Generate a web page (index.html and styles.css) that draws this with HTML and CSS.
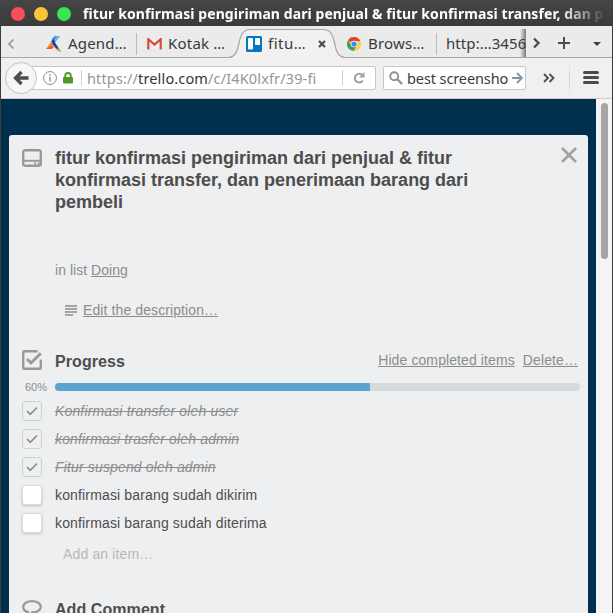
FILE: index.html
```html
<!DOCTYPE html>
<html lang="id">
<head>
<meta charset="utf-8">
<title>fitur konfirmasi pengiriman dari penjual</title>
<link rel="stylesheet" href="styles.css">
</head>
<body>
<div class="window">
  <header class="titlebar">
    <i class="dot red"></i><i class="dot yellow"></i><i class="dot green"></i>
    <span class="wintitle">fitur konfirmasi pengiriman dari penjual &amp; fitur konfirmasi transfer, dan p</span>
  </header>

  <nav class="tabs">
    <svg class="tab-prev" width="10" height="14" viewBox="0 0 10 14"><path d="M7.500 2.500 3 7l4.500 4.500" fill="none" stroke="#999" stroke-width="1.700"/></svg>
    <div class="tab tab-agenda">
      <svg width="16" height="16" viewBox="0 0 16 16"><path d="M6 3 9 0h4L9 6 6 8z" fill="#1d7fe0"/><path d="M10 0h4L9.500 6 8 4z" fill="#58b5ee"/><path d="M5 6 8 9 7 12 0 13z" fill="#f58a2c"/><path d="M0 13 5 10l3 1-2 2z" fill="#ef5a3c"/><path d="M5 5 7.500 4 10 8l5 8-4-2-3-4z" fill="#1f3f9a"/><path d="m11 12 4.500 4L10 14z" fill="#efb443"/></svg>
      <span class="tab-label">Agend…</span>
    </div>
    <div class="tab tab-mail">
      <svg width="15" height="12" viewBox="0 0 15 12"><path d="M1 1h13v10H1z" fill="#efeeee"/><path d="M1.300 11.500V1.200L7.500 6.500l6.200-5.300v10.300" fill="none" stroke="#d8493c" stroke-width="2.200"/></svg>
      <span class="tab-label">Kotak …</span>
    </div>
    <div class="tab tab-active">
      <svg class="tab-shape" width="118" height="33" viewBox="0 0 118 33"><path d="M0 33V31.500C5 31.500 8 29 9.500 23L12 13C14 6 16.500 3.500 23 3.500H94C101 3.500 103.500 6 105.500 13L108 23C109.500 29 113 31.500 118 31.500V33z" fill="#f2f1f0"/><path d="M0 31.500C5 31.500 8 29 9.500 23L12 13C14 6 16.500 3.500 23 3.500H94C101 3.500 103.500 6 105.500 13L108 23C109.500 29 113 31.500 118 31.500" fill="none" stroke="#a5a7ab" stroke-width="1.200"/></svg>
      <svg class="above" width="16" height="16" viewBox="0 0 16 16"><rect width="16" height="16" rx="1.500" fill="#0079bf"/><rect x="2" y="2" width="5" height="11.500" rx=".8" fill="#fff"/><rect x="9" y="2" width="5" height="7" rx=".8" fill="#fff"/></svg>
      <span class="tab-label above">fitu…</span>
      <svg class="tab-close above" width="8" height="8" viewBox="0 0 8 8"><path d="m1 1 6 6M7 1 1 7" stroke="#4a4b4a" stroke-width="2.200"/></svg>
    </div>
    <div class="tab tab-browse">
      <svg width="14" height="14" viewBox="0 0 14 14"><circle cx="7" cy="7" r="7" fill="#fbd146"/><path d="M7 7 1 3.400A7 7 0 0 1 13.200 4H7z" fill="#dc4437"/><path d="M1 3.400A7 7 0 0 0 6.500 14L9.500 9 7 7 4.500 8.500z" fill="#3ba05b"/><circle cx="7" cy="7" r="3.300" fill="#fff"/><circle cx="7" cy="7" r="2.600" fill="#4385ed"/></svg>
      <span class="tab-label">Brows…</span>
    </div>
    <div class="tab tab-http"><span class="tab-label">http:…3456</span></div>
    <div class="tab-tools">
      <svg width="85" height="31" viewBox="0 0 85 31"><path d="m7 12.500 4.500 4.500L7 21.500" fill="none" stroke="#4c4d4c" stroke-width="2.300"/><path d="M31 17h12M37 11v12" stroke="#4c4d4c" stroke-width="2"/><path d="M66 16h8l-4 4z" fill="#393f4c"/></svg>
    </div>
  </nav>

  <div class="toolbar">
    <div class="back"><svg width="30" height="30" viewBox="0 0 30 30"><path d="m15.500 9-6 6 6 6M10 15h12.500" fill="none" stroke="#4b4c4b" stroke-width="3.300"/></svg></div>
    <div class="urlbar">
      <svg class="info" width="14" height="14" viewBox="0 0 14 14"><circle cx="7" cy="7" r="6.400" fill="none" stroke="#888" stroke-width="1"/><path d="M7 6v4.500M7 3.300v1.500" stroke="#888" stroke-width="1.400"/></svg>
      <svg class="lock" width="10" height="12" viewBox="0 0 10 12"><path d="M2.200 6V3.800a2.800 2.800 0 0 1 5.600 0V6" fill="none" stroke="#4d9a26" stroke-width="1.800"/><rect y="5" width="10" height="6.500" rx="1" fill="#4d9a26"/></svg>
      <i class="sep"></i>
      <span class="url">https://<b>trello.com</b>/c/I4K0lxfr/39-fi</span>
      <i class="sep sep-reload"></i>
      <svg class="reload" width="12" height="12" viewBox="0 0 12 12"><path d="M9.500 3.500A4.300 4.300 0 1 0 9.800 8.400" fill="none" stroke="#97a0aa" stroke-width="2"/><path d="M11.500 0v5.500H6z" fill="#97a0aa"/></svg>
    </div>
    <div class="search">
      <svg width="14" height="14" viewBox="0 0 14 14"><circle cx="5.200" cy="5.200" r="4" fill="none" stroke="#929292" stroke-width="1.900"/><path d="m8 8 5 5" stroke="#929292" stroke-width="2.400"/></svg>
      <span class="query">best screensho</span>
      <svg width="11" height="12" viewBox="0 0 11 12"><path d="M0 6h9M5 1l5 5-5 5" fill="none" stroke="#8794a6" stroke-width="1.900"/></svg>
    </div>
    <svg class="more" width="12" height="10" viewBox="0 0 12 10"><path d="m1 1 4 4-4 4M6.500 1l4 4-4 4" fill="none" stroke="#4c4d4c" stroke-width="1.800"/></svg>
    <i class="tool-sep"></i>
    <div class="menu"><i></i><i></i><i></i></div>
  </div>

  <div class="viewport">
    <main class="page">
      <article class="card">
        <div class="head">
          <svg class="icon" width="20" height="18" viewBox="0 0 20 18"><rect x="1.200" y="1.200" width="17.600" height="15.600" rx="2" fill="none" stroke="#999" stroke-width="2.400"/><path d="M1 11.800h18" stroke="#999" stroke-width="2"/><path d="M12 14.500h2M15.500 14.500h2" stroke="#999" stroke-width="2"/></svg>
          <h1>fitur konfirmasi pengiriman dari penjual &amp; fitur konfirmasi transfer, dan penerimaan barang dari pembeli</h1>
          <svg class="close" width="16" height="16" viewBox="0 0 16 16"><path d="m1 1 14 14M15 1 1 15" stroke="#a1a1a1" stroke-width="2.700"/></svg>
        </div>
        <p class="inlist">in list <a>Doing</a></p>
        <p class="desc"><svg width="12" height="11" viewBox="0 0 12 11"><path d="M0 1h12M0 4h12M0 7h12M0 10h8" stroke="#8c8c8c" stroke-width="1.300"/></svg><a>Edit the description…</a></p>
        <div class="section">
          <svg class="icon" width="20" height="20" viewBox="0 0 20 20"><path d="M15.500 1.200H2.200a1 1 0 0 0-1 1v15.600a1 1 0 0 0 1 1h15.600a1 1 0 0 0 1-1V9.500" fill="none" stroke="#999" stroke-width="2.400"/><path d="m5 9 4 4L18.800 3.200" fill="none" stroke="#999" stroke-width="2.800"/></svg>
          <h2>Progress</h2>
          <a>Hide completed items</a><a>Delete…</a>
        </div>
        <div class="progress"><span class="pct">60%</span><div class="track"><div class="fill"></div></div></div>
        <ul class="items">
          <li class="done"><span class="box"><svg width="12" height="10" viewBox="0 0 12 10"><path d="m1 5 3.300 3.300L11 1.500" fill="none" stroke="#8c8c8c" stroke-width="1.700"/></svg></span>Konfirmasi transfer oleh user</li>
          <li class="done"><span class="box"><svg width="12" height="10" viewBox="0 0 12 10"><path d="m1 5 3.300 3.300L11 1.500" fill="none" stroke="#8c8c8c" stroke-width="1.700"/></svg></span>konfirmasi trasfer oleh admin</li>
          <li class="done"><span class="box"><svg width="12" height="10" viewBox="0 0 12 10"><path d="m1 5 3.300 3.300L11 1.500" fill="none" stroke="#8c8c8c" stroke-width="1.700"/></svg></span>Fitur suspend oleh admin</li>
          <li><span class="box"></span>konfirmasi barang sudah dikirim</li>
          <li><span class="box"></span>konfirmasi barang sudah diterima</li>
        </ul>
        <p class="add">Add an item…</p>
        <div class="section comment">
          <svg class="icon" width="20" height="18" viewBox="0 0 20 18"><path d="M6 12.200C3 11.300 1.200 9.300 1.200 6.800 1.200 3.500 5 1.200 10 1.200s8.800 2.300 8.800 5.600-3.800 5.700-8.800 5.700C10 14.500 8 16.500 5 16.800 6.300 15.500 6.800 13.800 6 12.200z" fill="none" stroke="#999" stroke-width="2.300"/></svg>
          <h2>Add Comment</h2>
        </div>
      </article>
    </main>
    <div class="scrollbar"><div class="thumb"></div></div>
  </div>
</div>
</body>
</html>
```
FILE: styles.css
```css
* { box-sizing: border-box; }
body { margin: 0; overflow: hidden; }
svg, i { display: block; flex: none; }
h1, h2, p, ul { margin: 0; padding: 0; }
.window {
  width: 613px; height: 613px; overflow: hidden;
  display: flex; flex-direction: column;
  background: #3c3b3b; padding: 0 1px;
  font-family: "Noto Sans", "Open Sans", sans-serif; color: #383a3c;
}

.titlebar { height: 26px; flex: none; display: flex; align-items: center; gap: 9px; padding: 2px 0 0 11px; margin: 0 -1px; background: linear-gradient(#464545, #3c3b3b); }
.dot { width: 14px; height: 14px; border-radius: 50%; }
.red { background: #f94f58; }
.yellow { background: #fcc337; }
.green { background: #35e748; }
.wintitle {
  width: 523px; margin: -1px 0 0 3px; overflow: hidden; white-space: nowrap;
  font-size: 14px; font-weight: 700; letter-spacing: 0.08px; color: #fff;
  -webkit-mask-image: linear-gradient(90deg, #000 91%, transparent);
  mask-image: linear-gradient(90deg, #000 91%, transparent);
}

.tabs { height: 32px; flex: none; display: flex; background: #ebebeb; border-bottom: 1px solid #a5a7ab; position: relative; font-size: 15px; }
.tab-prev { margin: 11px 0 0 5px; }
.tab { display: flex; align-items: center; height: 31px; padding-top: 4px; position: relative; white-space: nowrap; }
.tab-label { margin-top: -1px; letter-spacing: 0.2px; }
.tab-agenda { width: 121px; padding-left: 30px; gap: 6px; background: linear-gradient(#bbb, #bbb) right 7px / 1px 22px no-repeat; }
.tab-mail { width: 98px; padding-left: 10px; gap: 6px; }
.tab-active { width: 100px; padding-left: 11px; gap: 6px; }
.tab-active .tab-label { width: 40px; letter-spacing: 0.5px; }
.tab-shape { position: absolute; left: -7px; top: 0; z-index: 1; }
.above { position: relative; z-index: 2; }
.tab-close { margin-left: 4px; }
.tab-browse { width: 102px; padding-left: 12px; gap: 7px; background: linear-gradient(#bbb, #bbb) right 7px / 1px 22px no-repeat; }
.tab-http { width: 89px; padding-left: 9px; overflow: hidden; }
.tab-http .tab-label { letter-spacing: 0.08px; }
.tab-http::after { content: ""; position: absolute; right: 0; top: 3px; width: 6px; height: 28px; background: linear-gradient(90deg, transparent, rgba(60, 60, 60, .65)); }
.tab-tools { width: 85px; margin-left: 1px; }

.toolbar { height: 41px; flex: none; display: flex; align-items: center; background: #f1f0f0; border-bottom: 1px solid #c9cbcc; font-size: 14.500px; }
.back { width: 32px; height: 32px; margin-left: 4px; border: 1px solid #c4c4c4; border-radius: 50%; background: #f6f6f6; z-index: 1; display: flex; align-items: center; justify-content: center; }
.urlbar { width: 345px; height: 24px; margin-left: -6px; border: 1px solid #c8c8c8; border-radius: 2px; background: #fff; display: flex; align-items: center; }
.info { margin-left: 11px; }
.lock { margin-left: 6px; }
.sep { width: 1px; height: 16px; margin-left: 8px; background: #d0d0d0; }
.url { width: 254px; padding-left: 5px; color: #969696; white-space: nowrap; letter-spacing: 0.14px; }
.url b { font-weight: 400; color: #34373a; }
.sep-reload { margin-left: 6px; }
.reload { margin-left: 10px; }
.search { width: 143px; height: 24px; margin-left: 7px; padding: 0 3px 0 5px; border: 1px solid #c8c8c8; border-radius: 2px; background: #fff; display: flex; align-items: center; gap: 4px; }
.query { flex: 1; white-space: nowrap; letter-spacing: -0.1px; }
.more { margin-left: 17px; }
.tool-sep { width: 1px; height: 36px; margin-left: 14px; background: linear-gradient(transparent, #d0d0d0, transparent); }
.menu { margin: -2px 0 0 13px; display: grid; gap: 2px; }
.menu i { width: 16px; height: 3px; border-radius: 1.500px; background: #4a4b4a; }

.viewport { flex: 1; min-height: 0; display: flex; font-family: "Liberation Sans", Arial, sans-serif; color: #4d4d4d; font-size: 14px; line-height: 18px; letter-spacing: 0.15px; }
.page { width: 595px; background: #00304d; padding: 36px 8px 0; overflow: hidden; }
.scrollbar { width: 16px; background: #f4f4f4; padding: 4px 4px 0 5px; }
.thumb { height: 156px; border-radius: 4px; background: #a5a5a5; }
.card { height: 600px; border-radius: 3px 3px 0 0; background: #edeff0; padding: 12px 8px 0 13px; }
.card a { color: #8c8c8c; text-decoration: underline; }
.head { display: flex; height: 66px; }
.head .icon { margin: 2px 13px 0 0; }
.icon { margin-right: 13px; }
h1 { width: 440px; font-size: 18px; line-height: 22px; letter-spacing: 0; }
.close { margin: 0 3px 0 auto; }
.inlist { padding-left: 33px; margin-top: 48px; color: #8c8c8c; letter-spacing: 0.03px; }
.desc { display: flex; align-items: center; gap: 6px; padding-left: 43px; margin-top: 22px; }
.desc a { letter-spacing: 0.1px; }
.section { display: flex; height: 20px; margin-top: 31px; }
.section h2 { font-size: 16px; line-height: 24px; flex: 1; letter-spacing: 0.07px; }
.section a { margin-right: 2px; line-height: 20px; letter-spacing: 0.1px; }
.section a + a { margin-left: 6px; }
.progress { display: flex; align-items: center; height: 14px; margin-top: 10px; }
.pct { width: 33px; padding-left: 3px; font-size: 11px; letter-spacing: 0; color: #8c8c8c; }
.track { flex: 1; height: 8px; border-radius: 4px; overflow: hidden; background: #d6dadc; }
.fill { width: 60%; height: 8px; background: #5ba4cf; }
.items { list-style: none; margin-top: 3px; }
.items li { display: flex; align-items: center; height: 28px; }
.box { width: 20px; height: 20px; margin-right: 13px; border: 1px solid #dcdcdc; border-radius: 3px; background: #fff; box-shadow: 0 1px 3px rgba(0, 0, 0, .2); display: flex; align-items: center; justify-content: center; }
.done { color: #8c8c8c; font-style: italic; text-decoration: line-through; }
.done .box { background: #edeff0; border-color: #cdd2d4; box-shadow: none; }
.add { padding-left: 41px; margin-top: 8px; color: #b8b8b8; }
.comment { margin-top: 37px; height: 12px; }
.comment h2 { line-height: 19px; }
```
